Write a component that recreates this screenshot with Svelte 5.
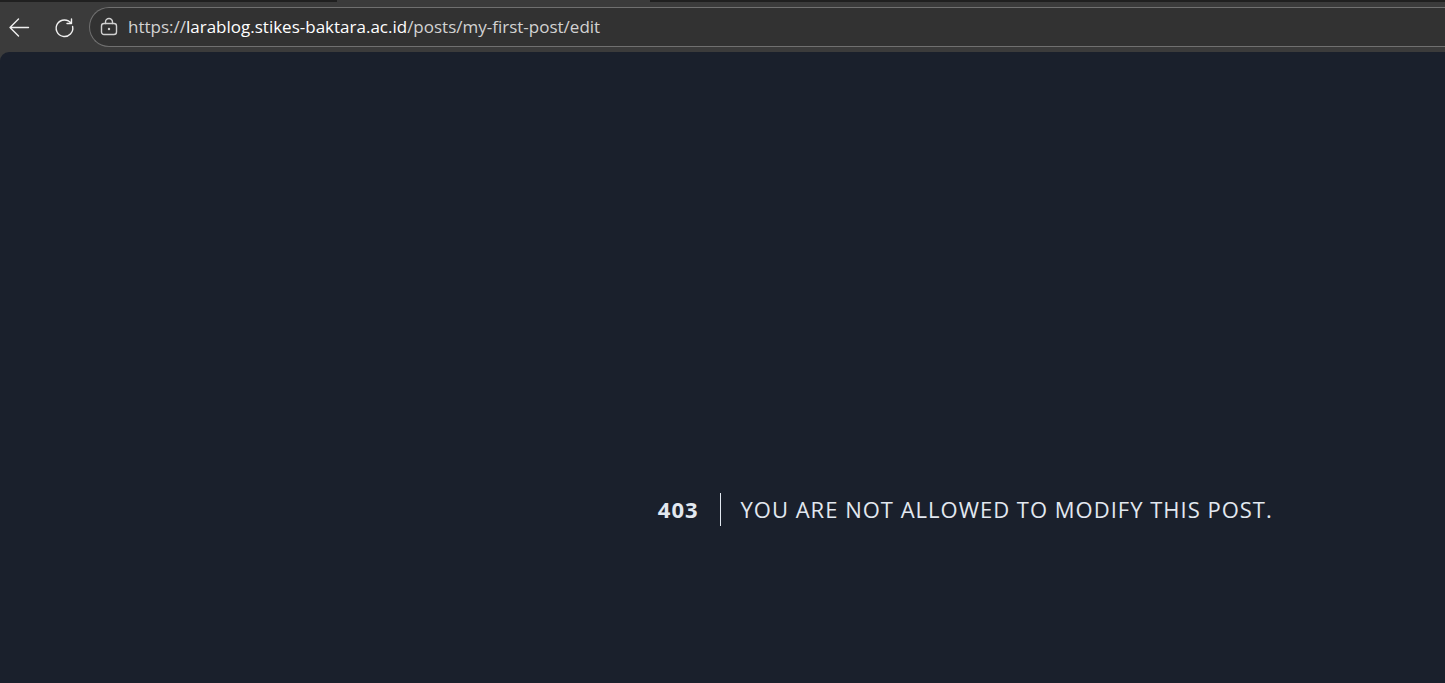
<script lang="ts">
  const url = {
    scheme: "https://",
    host: "larablog.stikes-baktara.ac.id",
    path: "/posts/my-first-post/edit",
  };
  const code: number = 403;
  const message: string = "You are not allowed to modify this post.";
</script>

<div class="browser">
  <div class="tabs"><div class="tab"></div></div>
  <header class="toolbar">
    <button class="nav" aria-label="Back">
      <svg width="22" height="22" viewBox="0 0 22 22">
        <path d="M20.5 11.5H2M10.5 3 2 11.5l8.500 8.500" />
      </svg>
    </button>
    <button class="nav" aria-label="Refresh">
      <svg width="22" height="22" viewBox="0 0 22 22">
        <path d="M18.300 7.500A8.300 8.300 0 1 0 19.600 10.500M18.500 3v4.500H14" />
      </svg>
    </button>
    <div class="address">
      <button class="site" aria-label="View site information">
        <svg width="18" height="20" viewBox="0 0 18 20">
          <rect x="1.5" y="6.5" width="15" height="11" rx="2.5" />
          <path d="M5.5 6.5V5a3.500 3.500 0 0 1 7 0v1.500" />
          <circle cx="9" cy="12" r="1.2" />
        </svg>
      </button>
      <div
        class="url"
        role="textbox"
        tabindex="0"
        aria-label="Address bar"
        contenteditable="true"
        spellcheck="false"
      >{url.scheme}<span class="host">{url.host}</span>{url.path}</div>
    </div>
  </header>
  <main>
    <div class="notice">
      <div class="code">{code}</div>
      <div class="message">{message}</div>
    </div>
  </main>
</div>

<style>
  :global(body) {
    background: #3b3b3b;
  }
  .browser {
    min-height: 100vh;
    display: flex;
    flex-direction: column;
    overflow: hidden;
    font-family: "Segoe UI", "Open Sans", "Noto Sans", sans-serif;
  }

  .tabs {
    height: 2px;
    padding-left: 337px;
    background: #202020;
  }
  .tab {
    width: 313px;
    height: 2px;
    background: #3b3b3b;
  }

  .toolbar {
    display: flex;
    align-items: center;
    height: 50px;
    padding-left: 8px;
  }
  button {
    display: flex;
    padding: 0;
    border: 0;
    background: none;
    color: #f0f0f0;
  }
  .nav {
    margin-right: 23px;
  }
  .nav + .nav {
    margin-right: 14px;
  }
  svg {
    fill: none;
    stroke: currentColor;
    stroke-width: 1.4;
    stroke-linecap: round;
    stroke-linejoin: round;
  }
  .site circle {
    fill: currentColor;
    stroke: none;
  }
  .address {
    flex: 1;
    box-sizing: border-box;
    display: flex;
    align-items: center;
    gap: 10px;
    height: 40px;
    padding-left: 10px;
    border: 1px solid #707070;
    border-right: 0;
    border-radius: 20px 0 0 20px;
    background: #323232;
  }
  .site {
    color: #d0d0d0;
  }
  .url {
    flex: 1;
    outline: none;
    color: #d2d2d2;
    font-size: 17px;
    line-height: 24px;
    white-space: nowrap;
  }
  .host {
    color: #fff;
  }

  main {
    flex: 1;
    display: grid;
    grid-template-rows: 14fr auto 5fr;
    padding-left: 44vw;
    border-top-left-radius: 9px;
    background: #1a202c;
    color: #e2e8f0;
  }
  .notice {
    grid-row: 2;
    display: flex;
    align-items: center;
    font-size: 22px;
    line-height: 33px;
    letter-spacing: 1px;
    text-transform: uppercase;
  }
  .code {
    padding: 0 21px 0 22px;
    border-right: 1px solid #e2e8f0;
    font-weight: 700;
  }
  .message {
    padding-left: 20px;
    white-space: nowrap;
  }
</style>
